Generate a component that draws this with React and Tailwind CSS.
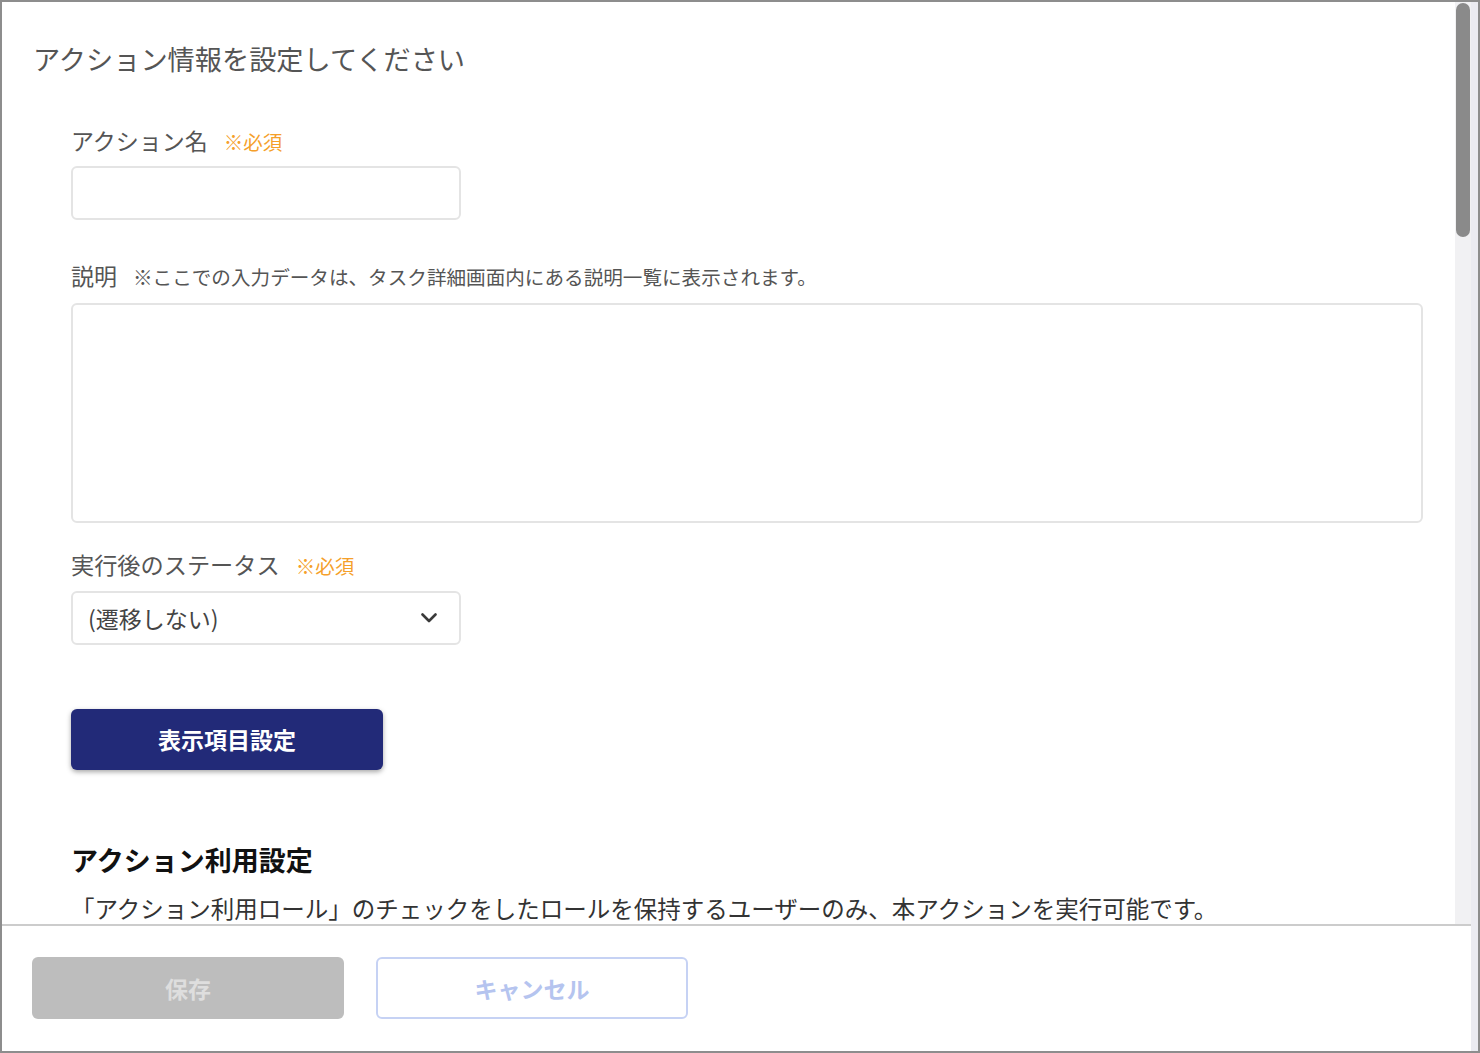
import { useState } from "react";

const FONT = { fontFamily: '"Noto Sans CJK JP", "Noto Sans", sans-serif' };

function Required() {
  return <span className="ml-[16px] text-[19.5px] text-[#f5a02a]">※必須</span>;
}

function ChevronDown() {
  return (
    <svg width="16" height="10" viewBox="0 0 16 10" fill="none">
      <polyline
        points="1.5,1.5 8,8 14.5,1.5"
        stroke="#3a3a3a"
        strokeWidth="2.6"
        strokeLinecap="round"
        strokeLinejoin="round"
      />
    </svg>
  );
}

export default function App() {
  const [name, setName] = useState("");
  const [desc, setDesc] = useState("");

  return (
    <div
      className="w-[1480px] h-[1053px] border-2 border-[#8d8d8d] bg-white flex overflow-hidden"
      style={FONT}
    >
      <div className="flex-1 flex flex-col min-w-0">
        {/* scroll area */}
        <div className="flex-1 flex min-h-0">
          <div className="flex-1 pl-[31px] pr-[32px] pt-[36px]">
            <h1 className="text-[27.2px] leading-[40px] text-[#555555] font-normal">
              アクション情報を設定してください
            </h1>

            <div className="pl-[38px]">
              <div className="mt-[46px] flex items-baseline text-[23px] leading-[32px] text-[#555555]">
                アクション名
                <Required />
              </div>
              <input
                className="mt-[8px] block w-[390px] h-[54px] rounded-[6px] border-2 border-[#e4e4e4] px-4 text-[22px] outline-none"
                value={name}
                onChange={(e) => setName(e.target.value)}
              />

              <div className="mt-[39px] flex items-baseline text-[23px] leading-[32px] text-[#555555]">
                説明
                <span className="ml-[16px] text-[19.6px] text-[#555555]">
                  ※ここでの入力データは、タスク詳細画面内にある説明一覧に表示されます。
                </span>
              </div>
              <textarea
                className="mt-[10px] block w-full h-[220px] rounded-[6px] border-2 border-[#e4e4e4] px-4 py-3 text-[22px] outline-none resize-none"
                value={desc}
                onChange={(e) => setDesc(e.target.value)}
              />

              <div className="mt-[25px] flex items-baseline text-[23.2px] leading-[32px] text-[#555555]">
                実行後のステータス
                <Required />
              </div>
              <div className="mt-[9px] w-[390px] h-[54px] rounded-[6px] border-2 border-[#e4e4e4] flex items-center justify-between pl-[15px] pr-[22px]">
                <span className="text-[23px] text-[#444444]">(遷移しない)</span>
                <ChevronDown />
              </div>

              <button className="mt-[64px] w-[312px] h-[61px] rounded-[6px] bg-[#222a78] text-white text-[23px] font-bold shadow-[0_2px_5px_rgba(0,0,0,0.35)]">
                表示項目設定
              </button>

              <h2 className="mt-[70px] text-[27px] leading-[40px] font-bold text-[#111111]">
                アクション利用設定
              </h2>
              <p className="mt-[15px] text-[23.5px] leading-[26px] text-[#333333] whitespace-nowrap">
                「アクション利用ロール」のチェックをしたロールを保持するユーザーのみ、本アクションを実行可能です。
              </p>
            </div>
          </div>

          {/* scrollbar */}
          <div className="w-[16px] bg-[#f1f1f3] pt-[1px]">
            <div className="mx-auto w-[14px] h-[234px] rounded-full bg-[#8a8a8a]" />
          </div>
        </div>

        {/* footer */}
        <div className="h-[127px] border-t-2 border-[#cccccc] flex items-start gap-[32px] pl-[30px] pt-[31px]">
          <button className="w-[312px] h-[62px] rounded-[6px] bg-[#bdbdbd] text-[23px] font-bold text-[#dedede]">
            保存
          </button>
          <button className="w-[312px] h-[62px] rounded-[6px] border-2 border-[#c6d2f4] bg-white text-[23px] font-bold text-[#b5c4ef]">
            キャンセル
          </button>
        </div>
      </div>
      <div className="w-[7px] bg-[#ebebf1]" />
    </div>
  );
}
